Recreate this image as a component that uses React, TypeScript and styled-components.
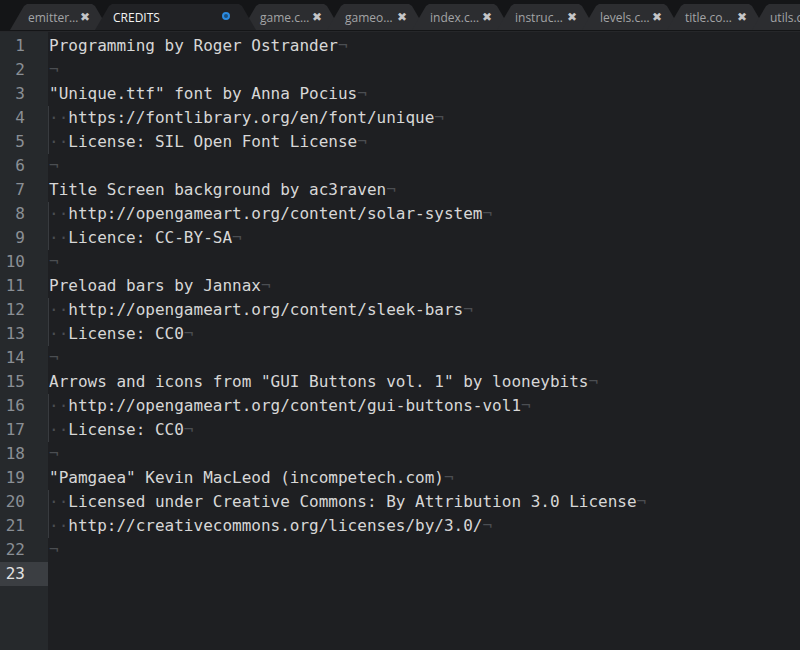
import React from "react";
import styled, { createGlobalStyle } from "styled-components";

const Global = createGlobalStyle`
  html, body { margin: 0; padding: 0; background: #1e1f22; }
  #root { height: 100vh; }
`;

const Window = styled.div`
  height: 100vh;
  display: flex;
  flex-direction: column;
  overflow: hidden;
  background: #1e1f22;
`;

const TabBar = styled.div`
  height: 32px;
  flex: none;
  display: flex;
  align-items: flex-end;
  padding-left: 10px;
  background: #141517;
  border-bottom: 1px solid #26272a;
  box-sizing: border-box;
  overflow: hidden;
`;

const Tab = styled.div<{ $active?: boolean }>`
  position: relative;
  flex: none;
  height: 26px;
  margin-bottom: 1px;
  width: ${(p) => (p.$active ? 161 : 99)}px;
  margin-right: -14px;
  z-index: ${(p) => (p.$active ? 5 : 1)};
  box-sizing: border-box;
  padding: 0 0 0 18px;
  display: flex;
  align-items: center;
  background: ${(p) => (p.$active ? "#212225" : "#2c2d30")};
  clip-path: polygon(0 100%, 14px 2px, 17px 0, calc(100% - 17px) 0, calc(100% - 14px) 2px, 100% 100%);
  font-family: "Open Sans", "Noto Sans", sans-serif;
  font-size: 12px;
  color: ${(p) => (p.$active ? "#f2f2f2" : "#a3a4a6")};
  white-space: nowrap;
`;

const TabLabel = styled.span`
  flex: none;
`;

const Close = styled.span`
  position: absolute;
  left: 70px;
  top: 6px;
  font-size: 12px;
  font-weight: 700;
  color: #c4c5c7;
  font-family: "DejaVu Sans", sans-serif;
`;

const Dirty = styled.span`
  position: absolute;
  left: 127px;
  top: 8px;
  width: 8px;
  height: 8px;
  border-radius: 50%;
  border: 2px solid #2b8ae0;
  background: #1a4d7a;
  box-sizing: border-box;
`;

const Body = styled.div`
  flex: 1;
  display: flex;
  min-height: 0;
`;

const Gutter = styled.div`
  width: 48px;
  flex: none;
  background: #26292c;
  padding-top: 2px;
  font-family: "DejaVu Sans Mono", monospace;
  font-size: 16px;
`;

const LineNo = styled.div<{ $current?: boolean }>`
  height: 24px;
  line-height: 24px;
  text-align: right;
  padding-right: 23px;
  color: ${(p) => (p.$current ? "#e2e2e2" : "#8a8f95")};
  background: ${(p) => (p.$current ? "#3b3e42" : "transparent")};
`;

const Code = styled.div`
  flex: 1;
  padding-top: 2px;
  font-family: "DejaVu Sans Mono", monospace;
  font-size: 16px;
  color: #d7d7d7;
`;

const Line = styled.div<{ $guide?: boolean }>`
  height: 24px;
  line-height: 24px;
  white-space: pre;
  padding-left: ${(p) => (p.$guide ? 0 : 1)}px;
  border-left: ${(p) => (p.$guide ? "1px solid #383b3f" : "none")};
`;

const Invisible = styled.span`
  color: #4b4e52;
`;

const lines = [
  "Programming by Roger Ostrander",
  "",
  "\"Unique.ttf\" font by Anna Pocius",
  "  https://fontlibrary.org/en/font/unique",
  "  License: SIL Open Font License",
  "",
  "Title Screen background by ac3raven",
  "  http://opengameart.org/content/solar-system",
  "  Licence: CC-BY-SA",
  "",
  "Preload bars by Jannax",
  "  http://opengameart.org/content/sleek-bars",
  "  License: CC0",
  "",
  "Arrows and icons from \"GUI Buttons vol. 1\" by looneybits",
  "  http://opengameart.org/content/gui-buttons-vol1",
  "  License: CC0",
  "",
  "\"Pamgaea\" Kevin MacLeod (incompetech.com)",
  "  Licensed under Creative Commons: By Attribution 3.0 License",
  "  http://creativecommons.org/licenses/by/3.0/",
  "",
  "",
];

const tabs = [
  { name: "emitter…" },
  { name: "CREDITS", active: true },
  { name: "game.c…" },
  { name: "gameo…" },
  { name: "index.c…" },
  { name: "instruc…" },
  { name: "levels.c…" },
  { name: "title.co…" },
  { name: "utils.co…" },
];

export default function App() {
  return (
    <Window>
      <Global />
      <TabBar>
        {tabs.map((t) => (
          <Tab key={t.name} $active={t.active}>
            <TabLabel>{t.name}</TabLabel>
            {t.active ? <Dirty /> : <Close>✖</Close>}
          </Tab>
        ))}
      </TabBar>
      <Body>
        <Gutter>
          {lines.map((_, i) => (
            <LineNo key={i} $current={i === lines.length - 1}>
              {i + 1}
            </LineNo>
          ))}
        </Gutter>
        <Code>
          {lines.map((l, i) => {
            const m = l.match(/^ */);
            const indent = m ? m[0].length : 0;
            const last = i === lines.length - 1;
            return (
              <Line key={i} $guide={indent > 0}>
                {indent > 0 && <Invisible>{"·".repeat(indent)}</Invisible>}
                {l.slice(indent)}
                {!last && <Invisible>¬</Invisible>}
              </Line>
            );
          })}
        </Code>
      </Body>
    </Window>
  );
}
